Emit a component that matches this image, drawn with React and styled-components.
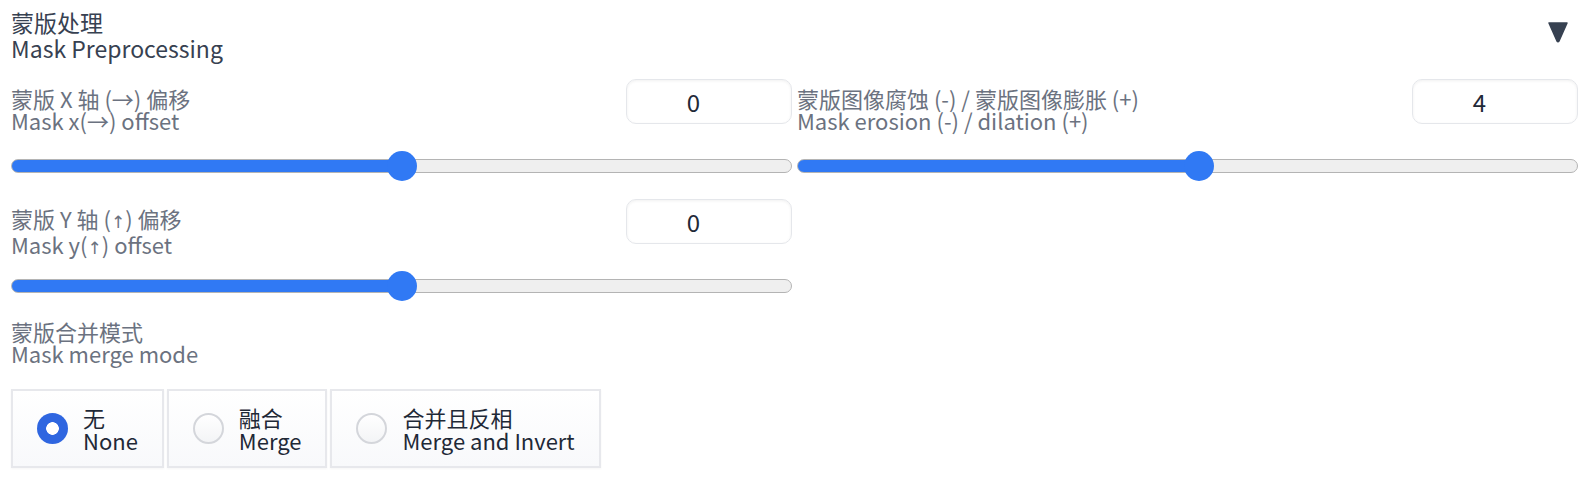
import React, { useState } from 'react'
import styled, { createGlobalStyle } from 'styled-components'

const GlobalStyle = createGlobalStyle`
  body {
    margin: 0;
    background: #fff;
    font-family: "Noto Sans CJK SC", "Noto Sans", sans-serif;
  }
  .mask-range::-webkit-slider-runnable-track {
    background: linear-gradient(to right, #3079f4 var(--pct), #efefef var(--pct));
  }
`

const Panel = styled.div`
  padding: 9px 10px 10px 11px;
`

const Header = styled.div`
  display: flex;
  justify-content: space-between;
  align-items: flex-start;
`

const Title = styled.div`
  font-size: 23px;
  line-height: 26px;
  color: #374151;
`

const Arrow = styled.svg`
  width: 20px;
  height: 22px;
  margin: 12px 10px 0 0;
`

const Grid = styled.div`
  display: grid;
  grid-template-columns: 1fr 1fr;
  column-gap: 5px;
  row-gap: 18px;
  margin-top: 18px;
`

const SliderBlock = styled.div`
  display: flex;
  flex-direction: column;
`

const TopRow = styled.div`
  display: flex;
  justify-content: space-between;
  align-items: flex-start;
  height: 45px;
`

const Label = styled.div`
  font-size: 22px;
  line-height: 22px;
  color: #6b7280;
  margin-top: ${({ offset }) => offset || 0}px;
`

const UpGlyph = styled.span`
  font-family: "DejaVu Sans", sans-serif;
  font-size: 17px;
`

const NumberBox = styled.input`
  width: 166px;
  height: 45px;
  box-sizing: border-box;
  padding: 0 31px 0 0;
  border: 1px solid #e5e7eb;
  border-radius: 10px;
  box-shadow: inset 0 1px 3px rgba(0, 0, 0, 0.06);
  text-align: center;
  font-family: inherit;
  font-size: 24px;
  color: #1f2937;
  outline: none;
  -moz-appearance: textfield;
  &::-webkit-outer-spin-button,
  &::-webkit-inner-spin-button {
    -webkit-appearance: none;
    margin: 0;
  }
`

const Range = styled.input`
  -webkit-appearance: none;
  appearance: none;
  display: block;
  width: 100%;
  height: 14px;
  margin: 35px 0 8px 0;
  padding: 0;
  background: transparent;
  &::-webkit-slider-runnable-track {
    height: 14px;
    box-sizing: border-box;
    border: 1px solid #b4b4b4;
    border-radius: 7px;
  }
  &::-webkit-slider-thumb {
    -webkit-appearance: none;
    width: 30px;
    height: 30px;
    border-radius: 50%;
    background: #3079f4;
    border: none;
    margin-top: -9px;
  }
`

const RadioSection = styled.div`
  margin-top: 19px;
`

const RadioRow = styled.div`
  display: flex;
  gap: 3px;
  margin-top: 25px;
`

const RadioBox = styled.label`
  display: flex;
  align-items: center;
  gap: 15px;
  height: 79px;
  box-sizing: border-box;
  padding: 0 24px;
  border: 2px solid #e7e8ec;
  background: linear-gradient(to bottom, #ffffff, #f8f9fb);
  box-shadow: 0 1px 2px rgba(0, 0, 0, 0.04);
  cursor: pointer;
`

const Dot = styled.span`
  width: 31px;
  height: 31px;
  box-sizing: border-box;
  border-radius: 50%;
  flex-shrink: 0;
  ${({ checked }) =>
    checked
      ? `background: radial-gradient(circle, #fff 0 6px, #2f66e0 6.6px);`
      : `border: 2px solid #d4d6db; background: linear-gradient(#fff, #f3f4f6);`}
`

const OptionText = styled.span`
  font-size: 22px;
  line-height: 23px;
  color: #1f2937;
`

const Slider = ({ zh, en, value, min, max }) => {
  const pct = ((value - min) / (max - min)) * 100
  return (
    <SliderBlock>
      <TopRow>
        <Label offset={8}>
          {zh}
          <br />
          {en}
        </Label>
        <NumberBox type="number" defaultValue={value} />
      </TopRow>
      <Range
        type="range"
        className="mask-range"
        min={min}
        max={max}
        defaultValue={value}
        style={{ '--pct': `${pct}%` }}
      />
    </SliderBlock>
  )
}

const options = [
  { zh: '无', en: 'None' },
  { zh: '融合', en: 'Merge' },
  { zh: '合并且反相', en: 'Merge and Invert' },
]

export default function App() {
  const [mode, setMode] = useState(0)
  return (
    <Panel>
      <GlobalStyle />
      <Header>
        <Title>
          蒙版处理
          <br />
          Mask Preprocessing
        </Title>
        <Arrow viewBox="0 0 20 22">
          <path d="M1 2 H19 L11 20 Q10 21.5 9 20 Z" fill="#374151" stroke="#374151" strokeWidth="1.5" strokeLinejoin="round" />
        </Arrow>
      </Header>
      <Grid>
        <Slider zh="蒙版 X 轴 (→) 偏移" en="Mask x(→) offset" value={0} min={-100} max={100} />
        <Slider
          zh="蒙版图像腐蚀 (-) / 蒙版图像膨胀 (+)"
          en="Mask erosion (-) / dilation (+)"
          value={4}
          min={-128}
          max={128}
        />
        <Slider
          zh={<>蒙版 Y 轴 (<UpGlyph>↑</UpGlyph>) 偏移</>}
          en={<>Mask y(<UpGlyph>↑</UpGlyph>) offset</>}
          value={0}
          min={-100}
          max={100}
        />
      </Grid>
      <RadioSection>
        <Label>
          蒙版合并模式
          <br />
          Mask merge mode
        </Label>
        <RadioRow>
          {options.map((o, i) => (
            <RadioBox key={i} onClick={() => setMode(i)}>
              <Dot checked={mode === i} />
              <OptionText>
                {o.zh}
                <br />
                {o.en}
              </OptionText>
            </RadioBox>
          ))}
        </RadioRow>
      </RadioSection>
    </Panel>
  )
}
